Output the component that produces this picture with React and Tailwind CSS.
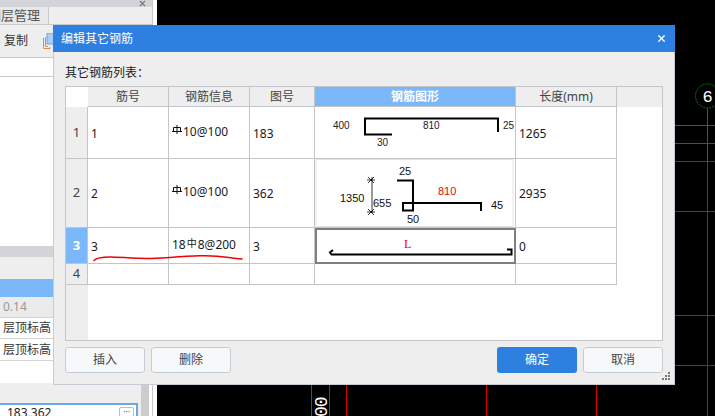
import React from 'react';
import { X } from 'lucide-react';

const FONT = 'font-["Noto_Sans","Noto_Sans_CJK_SC",sans-serif]';

// Column widths of the rebar table
const COLS = ['w-[81px]', 'w-[81px]', 'w-[65px]', 'w-[201px]', 'w-[101px]'];

// Rebar grade symbol, drawn
function Bar() {
  return (
    <svg width="10" height="9" viewBox="0 0 10 9" className="inline-block align-[2px] mr-px" fill="none" stroke="#111" strokeWidth="1">
      <path d="M0 6.500H10M1.500 2.500H8.500V6.500M1.500 2.500V6.500M5 0V9" />
    </svg>
  );
}

const ROWS = [
  { no: '1', h: 'h-[52px]', id: '1', info: <span className="-mt-1 block"><Bar />10@100</span>, fig: '183', len: '1265' },
  { no: '2', h: 'h-[69px]', id: '2', info: <span className="-mt-1 block"><Bar />10@100</span>, fig: '362', len: '2935' },
  { no: '3', h: 'h-[36px]', id: '3', info: <span className="-mt-1 block">18<span className="text-[10px] align-[2px] mx-px">中</span>8@200</span>, fig: '3', len: '0', active: true },
  { no: '4', h: 'h-[21px]', id: '', info: '', fig: '', len: '' },
];

function ShapeOne() {
  return (
    <svg width="200" height="51" className="block" fontFamily="Liberation Sans">
      <path d="M77 27.500H50V11.500H183V25" fill="none" stroke="#000" strokeWidth="2" />
      <text x="18" y="22" fontSize="10" fill="#222">400</text>
      <text x="108" y="22" fontSize="10" fill="#222">810</text>
      <text x="188" y="22" fontSize="10" fill="#222">25</text>
      <text x="62" y="39" fontSize="10" fill="#222">30</text>
    </svg>
  );
}

function ShapeTwo() {
  return (
    <svg width="200" height="68" className="block" fontFamily="Liberation Sans">
      <rect x="1" y="0.500" width="197" height="67" fill="none" stroke="#e4e4e4" />
      <path d="M82 21.500H98V51.500H88V44H166V52" fill="none" stroke="#000" strokeWidth="2" />
      <path d="M57 18V54M53 18l6 6M59 18l-6 6M53 50l6 6M59 50l-6 6M52 21h8M52 53h8" fill="none" stroke="#000" strokeWidth="0.800" />
      <text x="84" y="16" fontSize="11" fill="#111">25</text>
      <text x="25" y="43" fontSize="11" fill="#111">1350</text>
      <text x="58" y="48" fontSize="11" fill="#111">655</text>
      <text x="123" y="36" fontSize="11" fill="#ef0000">810</text>
      <text x="176" y="50" fontSize="11" fill="#111">45</text>
      <text x="92" y="64" fontSize="11" fill="#111">50</text>
    </svg>
  );
}

function ShapeThree() {
  return (
    <svg width="200" height="36" className="block">
      <path d="M192 21.500H196.500V26.500H16.500L15 24.500 18 22" fill="none" stroke="#000" strokeWidth="2" />
      <text x="89" y="20" fontSize="12" fontFamily="Liberation Serif" fill="#ef0000">L</text>
    </svg>
  );
}

function DataRow({ row, index }) {
  const cell = 'border-r border-b border-[#c4c5cb] flex items-center pl-[3px] pt-[2px] shrink-0';
  return (
    <div className={`flex ${row.h} text-[12px] text-[#1a1a1a]`}>
      <div className={`w-[22px] shrink-0 flex items-center justify-center border-r border-b border-[#c4c5cb] text-[13px] ${row.active ? 'bg-[#7ab8f9] text-white font-bold' : 'bg-[#eeeeee] text-[#444]'}`}>
        {row.no}
      </div>
      <div className={`${COLS[0]} ${cell}`}>{row.id}</div>
      <div className={`${COLS[1]} ${cell}`}>{row.info}</div>
      <div className={`${COLS[2]} ${cell}`}>{row.fig}</div>
      <div className={`${COLS[3]} shrink-0 border-r border-b border-[#c4c5cb] overflow-hidden ${row.active ? 'outline-2 -outline-offset-2 outline-[#7f7f7f]' : ''}`}>
        {index === 0 && <ShapeOne />}
        {index === 1 && <ShapeTwo />}
        {index === 2 && <ShapeThree />}
      </div>
      <div className={`${COLS[4]} ${cell}`}>{row.len}</div>
    </div>
  );
}

function RebarTable() {
  const head = 'shrink-0 border-r border-b border-[#c4c5cb] flex items-center justify-center pt-[1px] bg-[#eeeeee] text-[#444]';
  return (
    <div className="relative h-[255px] border border-[#c4c5cb] bg-white flex flex-col">
      <div className="flex h-[20px] text-[12px]">
        <div className="w-[22px] shrink-0 bg-white" />
        <div className={`${COLS[0]} ${head}`}>筋号</div>
        <div className={`${COLS[1]} ${head}`}>钢筋信息</div>
        <div className={`${COLS[2]} ${head}`}>图号</div>
        <div className={`${COLS[3]} shrink-0 border-r border-b border-[#c4c5cb] flex items-center justify-center pt-[1px] bg-[#7ab8f9] text-white font-bold`}>钢筋图形</div>
        <div className={`${COLS[4]} ${head}`}>长度(mm)</div>
        <div className="flex-1 bg-[#eeeeee]" />
      </div>
      {ROWS.map((row, i) => <DataRow key={row.no} row={row} index={i} />)}
      <div className="flex-1 flex">
        <div className="w-[22px] bg-[#eeeeee]" />
      </div>
      {/* red pen underline over row 3 */}
      <svg width="170" height="16" className="absolute left-[26px] top-[160px]" fill="none">
        <path d="M2 13.500C5 10.500 10 10 18 10S42 11.500 55 11.500 85 9.500 108 8.800 135 11 150 12" stroke="#f00000" strokeWidth="1.500" strokeLinecap="round" />
      </svg>
    </div>
  );
}

function Btn({ children, primary }) {
  return (
    <button className={`w-[80px] h-[26px] rounded-[3px] text-[12px] ${primary ? 'bg-[#2d7fe0] text-white' : 'bg-[#f7f8f9] border border-[#c4ccd8] text-[#444]'}`}>
      {children}
    </button>
  );
}

function Dialog() {
  return (
    <div className="absolute left-[53px] top-[25px] w-[622px] h-[360px] bg-[#eeeeee] border-b border-x border-[#c6cbd6] flex flex-col">
      <div className="-mx-px h-[27px] shrink-0 bg-[#2d7fe0] flex items-center justify-between pl-[8px] pr-[8px] text-[12px] text-white">
        <span>编辑其它钢筋</span>
        <X size={11} strokeWidth={3} />
      </div>
      <div className="flex-1 px-[11px] flex flex-col">
        <div className="h-[34px] shrink-0 flex items-end pb-[4px] text-[12px] text-[#222]">其它钢筋列表：</div>
        <RebarTable />
        <div className="mt-[6px] flex gap-[6px]">
          <Btn>插入</Btn>
          <Btn>删除</Btn>
          <div className="flex-1" />
          <Btn primary>确定</Btn>
          <Btn>取消</Btn>
        </div>
      </div>
      {/* resize grip */}
      <svg width="9" height="9" className="absolute right-[3px] bottom-[3px]" fill="#777">
        <rect x="6" y="0" width="2" height="2" />
        <rect x="3" y="3" width="2" height="2" />
        <rect x="6" y="3" width="2" height="2" />
        <rect x="0" y="6" width="2" height="2" />
        <rect x="3" y="6" width="2" height="2" />
        <rect x="6" y="6" width="2" height="2" />
      </svg>
    </div>
  );
}

function CopyIcon() {
  return (
    <svg width="11" height="16" viewBox="0 0 11 16" className="block">
      <path d="M0.500 5V15.500H7V14M2.500 4V13.500H5" fill="none" stroke="#e08b45" />
      <rect x="4" y="0" width="7" height="11" fill="#a9cdf5" stroke="#6aa8e8" />
    </svg>
  );
}

function LeftPanel() {
  return (
    <div className="w-[157px] h-full shrink-0 bg-white text-[12px] text-[#333]">
      <div className="w-[153px] h-full flex flex-col bg-[#eeeeee] border-r border-[#c9c9cc]">
        <div className="h-[7px] bg-[#d3d4d8] flex items-center justify-end pr-[5px] text-[#777]">
          <X size={9} strokeWidth={3} />
        </div>
        <div className="h-[18px] flex border-b border-[#c9c9cc]">
          <div className="w-[49px] bg-[#e8e8e8] border-r border-[#c9c9cc] text-[13px] text-[#555] overflow-hidden flex justify-end items-center pr-[8px] whitespace-nowrap">图层管理</div>
        </div>
        <div className="h-[33px] flex items-center pl-1 gap-[15px] border-b border-[#c9c9cc]">
          <span>复制</span>
          <CopyIcon />
        </div>
        <div className="h-[19px] bg-white border-b border-[#c9c9cc]" />
        <div className="h-[169px] bg-white" />
        <div className="h-[11px] bg-[#d3d4d8]" />
        <div className="h-[22px]" />
        <div className="h-[18px] bg-[#7ab8f9]" />
        <div className="h-[21px] bg-[#ebebeb] text-[#999] flex items-center pl-[3px] border-b border-[#d5d5d5]">0.14</div>
        <div className="h-[21px] bg-white flex items-center pl-[3px] border-b border-[#d5d5d5]">层顶标高</div>
        <div className="h-[22px] bg-white flex items-center pl-[3px] border-b border-[#d5d5d5]">层顶标高</div>
        <div className="h-[22px] bg-white" />
        <div className="flex-1 flex min-h-0">
          <div className="w-[141px] flex flex-col justify-end">
            <div className="w-[138px] h-[13px] bg-white border-t-2 border-r-2 border-[#6aa8e8] text-[#222] pl-[7px] pt-[1px] flex justify-between items-start leading-[14px] overflow-hidden">
              <span>183,362</span>
              <span className="w-[15px] h-[12px] mt-[1px] mr-[2px] rounded-t-[2px] border border-[#9dc3ee] text-[#2d7fe0] text-[9px] text-center leading-[8px]">···</span>
            </div>
          </div>
          <div className="w-[8px] bg-[#cccccc]" />
          <div className="flex-1 bg-white" />
        </div>
      </div>
    </div>
  );
}

// CAD drawing behind the dialog
function CadCanvas() {
  return (
    <svg width="558" height="416" className="block flex-1" fontFamily="Liberation Mono">
      <path d="M518 125.500H558M518 143.500H558M550.500 108V161M154.500 385V416M172.500 385V416" stroke="#0c7d0c" />
      <circle cx="550.500" cy="96" r="12" fill="none" stroke="#0c7d0c" strokeDasharray="2 1" />
      <text x="550.500" y="102" fontSize="17" fill="#fff" textAnchor="middle">6</text>
      <path d="M518 161.500H558M518 211.500H558M518 315.500H558M518 365.500H558M550.500 161V416" stroke="#e00000" />
      <path d="M189.500 385V416M329.500 385V416M439.500 385V416" stroke="#e00000" />
      <text transform="translate(170 417) rotate(-90)" fontSize="18" letterSpacing="-1" fill="#fff">00</text>
    </svg>
  );
}

export default function App() {
  return (
    <div className={`relative w-[715px] h-[416px] overflow-hidden bg-black flex ${FONT}`}>
      <LeftPanel />
      <CadCanvas />
      <Dialog />
    </div>
  );
}
